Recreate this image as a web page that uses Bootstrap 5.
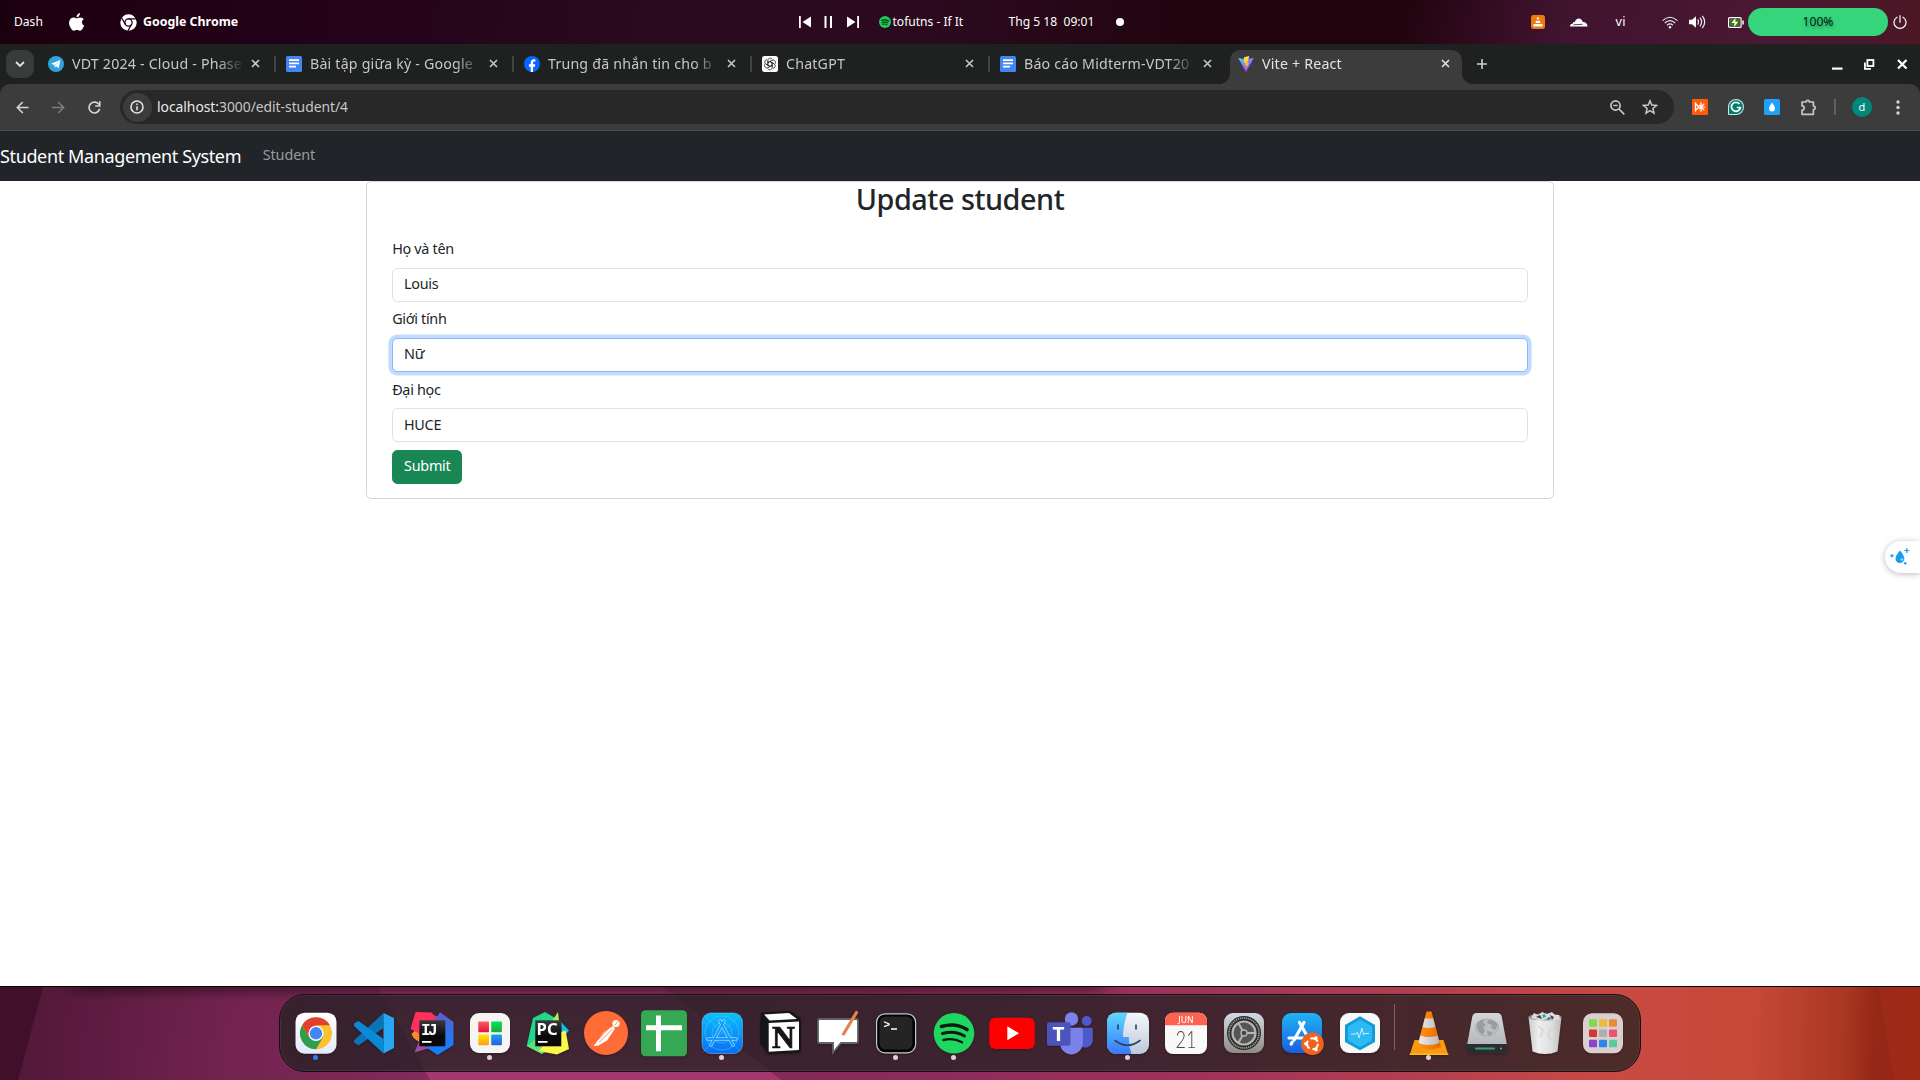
<!DOCTYPE html>
<html lang="vi">
<head>
<meta charset="utf-8">
<meta name="viewport" content="width=device-width, initial-scale=1">
<title>Vite + React</title>
<link href="https://cdn.jsdelivr.net/npm/bootstrap@5.3.0/dist/css/bootstrap.min.css" rel="stylesheet">
<style>
html{font-size:14.4px}
body{--bs-body-font-family:"Noto Sans","Open Sans",sans-serif;font-family:"Noto Sans","Open Sans",sans-serif;width:1920px;height:1080px;overflow:hidden;background:#000}
svg{display:block;flex:none}
.screen{width:1920px;height:1080px}
.cell{display:flex;align-items:center;justify-content:center;flex:none}
/* system bar */
.sysbar{height:44px;flex:none;color:#fff;font-size:12.1px;line-height:20px;white-space:pre;padding:0 13.5px 0 14px;background:linear-gradient(100deg,#1d000f 0,#23021a 17%,#2a0a1e 34%,#2b0a1f 48%,#22040f 62%,#22040f 73%,#40132f 81%,#4a1833 92%,#4c1725 100%)}
.sysbar .dash{width:28.5px}
.sysbar .apple{margin:0 35.5px 0 26px}
.sysbar .appname{font-size:12.4px;margin-left:6px;width:95px}
.sysbar .media{margin-left:560.5px}
.sysbar .spot{margin:0 2px 0 20px}
.sysbar .song{width:72px;letter-spacing:-.02px}
.sysbar .clock{margin-left:44px;width:86px}
.sysbar .bell{margin-left:21px}
.sysbar .cloud{margin:0 28px 0 24.5px}
.sysbar .lang{width:11px;font-size:12.6px;letter-spacing:.4px}
.sysbar .wifi{margin:0 11.5px 0 35px}
.sysbar .bat{margin:0 4.5px 0 21.5px}
.sysbar .power{margin-left:4.5px}
.charge{width:140px;height:28px;border-radius:14px;background:#35d57c;color:#04240f;text-shadow:1px 2px 3px rgba(0,0,0,.35)}
/* browser */
.browser{height:943px;flex:none;border-bottom:1px solid #000;background:#1f2120}
.tabstrip{height:40px;padding-left:6px}
.tabsearch{width:28px;height:28px;border-radius:9px;background:#3a3b3b;margin-right:3.5px}
.tabx{width:238px;height:34px;flex:none;padding-left:10.5px;padding-bottom:7px;font-size:14.2px;letter-spacing:.2px;color:#c7c7c7;position:relative}
.tabx::after{content:"";position:absolute;right:0;top:6px;width:2px;height:16px;background:#434544}
.tabx.last-idle::after{display:none}
.tabx .ttl{width:169px;margin-left:8px;overflow:hidden;white-space:nowrap;line-height:22px;-webkit-mask-image:linear-gradient(90deg,#000 86%,rgba(0,0,0,.12) 100%);mask-image:linear-gradient(90deg,#000 86%,rgba(0,0,0,.12) 100%)}
.tabx .cls{margin-left:10px}
.tabx.current{width:232px;margin-left:2.5px;padding-left:8px;background:#3c3c3c;border-radius:10px 10px 0 0;color:#e3e3e3}
.tabx.current::before,.tabx.current::after{content:"";position:absolute;top:auto;bottom:0;width:10px;height:10px;background:radial-gradient(circle at 0 0,transparent 9.5px,#3c3c3c 10px)}
.tabx.current::before{left:-10px}
.tabx.current::after{right:-10px;background:radial-gradient(circle at 100% 0,transparent 9.5px,#3c3c3c 10px)}
.newtab{width:40px}
.winb .w-min{width:34px}.winb .w-res{width:30px}.winb .w-cls{width:36px}
.toolbar{height:47px;background:#3c3c3c;border-bottom:1px solid #4b4c4c;border-radius:10px 10px 0 0;padding-left:4px}
.w36{width:36px}
.omni{width:1554px;height:34px;flex:none;border-radius:17px;background:#282828;margin:0 8px;padding-right:16px;font-size:13.9px;letter-spacing:-.04px;color:#c7c7c7}
.omni b{font-weight:400;color:#e8e8e8}
.omni .star{margin-left:17px}
.infob{width:29px;height:29px;border-radius:50%;background:#3c3c3c;margin-left:2.5px;margin-right:5.5px}
.tsep{width:18px}
.avatar{width:20px;height:20px;border-radius:50%;background:#00897b;color:#fff;font-size:11px;line-height:18px}
/* page */
.page{background:#fff;flex:1;position:relative}
.sms-nav{height:50px;background:#212529;padding:0}
.sms-nav .navbar-brand{padding-bottom:4px;letter-spacing:-.37px}
.sms-nav .nav-link{color:rgba(255,255,255,.55);padding-bottom:9px;letter-spacing:-.08px}
.student-card{width:1188px;margin:0 auto;border-color:#d3d4d5;letter-spacing:-.28px}
.student-card h2{letter-spacing:-.47px}
.student-card .inner{padding:0 25.2px 14.4px;margin-top:15.1px}
.student-card .form-label{letter-spacing:-.32px;margin-top:-.8px;margin-bottom:8.1px}
.student-card .form-control{padding-top:4.4px;padding-bottom:6.2px}
.student-card .form-control.is-focus{border-color:#86b7fe;box-shadow:0 0 0 .25rem rgba(13,110,253,.25)}
.student-card .btn{padding-top:4.2px;padding-bottom:6.4px;letter-spacing:-.25px}
.side-tool{position:absolute;right:0;top:360px;width:35px;height:32px;border-radius:16px 0 0 16px;background:#fff;box-shadow:0 1px 6px rgba(0,0,0,.28);padding-left:5px}
/* desktop and dock */
.desk{height:93px;position:relative;overflow:hidden}
.wall{position:absolute;left:0;top:0}
.dock{position:relative;width:1362px;height:78px;margin:7px 0 0 278.5px;border-radius:26px;background:rgba(33,33,33,.74);border:1px solid #1a0c13;box-shadow:inset 0 0 0 1px rgba(255,255,255,.08);padding-left:7px}
.app{width:58px;height:76px;position:relative}
.app svg{filter:drop-shadow(0 1px 1px rgba(0,0,0,.25))}
.app.on::after{content:"";position:absolute;left:26.5px;bottom:11px;width:5px;height:5px;border-radius:50%;background:#dcd3d8}
.app.on.focus::after{background:#2f7bf6}
.dsep{width:1px;height:46px;margin:9px 5px 0;background:#7d6367;align-self:flex-start}
</style>
</head>
<body>
<div class="screen d-flex flex-column">

<!-- system bar -->
<div class="sysbar d-flex align-items-center">
  <span class="dash">Dash</span>
  <svg class="apple" width="16" height="18" viewBox="0 0 16 18" fill="#fff"><path d="M11 0c.1 1.200-.3 2.200-1 3-.7.8-1.600 1.300-2.500 1.200C7.400 3.200 7.900 2.200 8.500 1.500 9.100.7 10.100.1 11 0zM14.800 6.200c-1.200.8-1.800 1.700-1.800 3 0 1.500.8 2.700 2.200 3.300-.3.900-.8 1.900-1.400 2.800-.8 1.200-1.600 2.400-2.900 2.400-1.200 0-1.600-.7-3-.7s-1.900.7-3 .8c-1.200 0-2.200-1.300-3-2.500C.2 13 -.7 9.200.9 6.700 1.700 5.300 3 4.500 4.500 4.500c1.300 0 2.300.8 3.200.8.8 0 2.100-1 3.700-.8 1.300.1 2.600.6 3.400 1.700z"/></svg>
  <svg width="17" height="17" viewBox="0 0 17 17"><circle cx="8.500" cy="8.500" r="8.200" fill="#fff"/><circle cx="8.500" cy="8.500" r="3.600" fill="#fff" stroke="#23021a" stroke-width="1.300"/><path d="M8.500 4.900h7.400M5.400 10.300 1.700 4M11.600 10.300 8 16.700" stroke="#23021a" stroke-width="1.300"/></svg>
  <b class="appname">Google Chrome</b>
  <svg class="media" width="60" height="12" viewBox="0 0 60 12" fill="#fff"><path d="M0 0h1.800v12H0zM12 .5v11L3.500 6zM25.500 0h2v12h-2zM31 0h2v12h-2zM48 .5v11L56.500 6zM58.200 0H60v12h-1.800z"/></svg>
  <svg class="spot" width="12" height="12" viewBox="0 0 14 14"><circle cx="7" cy="7" r="7" fill="#1ec95a"/><g fill="none" stroke="#0b2a15" stroke-linecap="round"><path d="M3 5q4.500-1.300 8 .7" stroke-width="1.400"/><path d="M3.500 7.300q3.700-1 6.800.7" stroke-width="1.200"/><path d="M4 9.500q3-.8 5.500.6" stroke-width="1"/></g></svg>
  <span class="song">tofutns - If It</span>
  <span class="clock">Thg 5 18  09:01</span>
  <svg class="bell" width="8" height="8"><circle cx="4" cy="4" r="4" fill="#fff"/></svg>
  <div class="ms-auto d-flex align-items-center">
    <svg width="14" height="14" viewBox="0 0 14 14"><rect width="14" height="14" rx="2.500" fill="#ee7a0d"/><path d="M6.200 2.500h1.600l.6 1.800H5.600zM5.100 5.700h3.800l.7 2.200H4.400zM2.500 9h9v2.500h-9z" fill="#fff"/></svg>
    <svg class="cloud" width="18" height="9" viewBox="0 0 18 9" fill="#fff"><path d="M0 8.500c0-2 1.200-3 2.600-2.800C2.700 4.300 3.700 3.800 4.800 4.200 5.500 1.500 7.200.3 9.200.5c2 .2 3.200 1.700 3.500 3.400 2.800-.2 4.700 1.700 4.900 4.600z"/><path d="M3.500 6.800 12.500 6.300" stroke="#40132f" stroke-width=".8"/></svg>
    <span class="lang">vi</span>
    <svg class="wifi" width="16" height="13" viewBox="0 0 17 13" fill="none" stroke="#eee" stroke-width="1.200"><path d="M.6 4.600Q8.500-2.800 16.400 4.600M3 7Q8.500 1.900 14 7M5.400 9.400Q8.500 6.600 11.600 9.400"/><circle cx="8.500" cy="11.500" r=".8" fill="#fff"/></svg>
    <svg width="17" height="14" viewBox="0 0 17 14" fill="none" stroke="#eee" stroke-width="1.200"><path d="M0 4.700h3L7 1.200v11.600L3 9.300H0z" fill="#fff" stroke="none"/><path d="M8.600 4.400q1.800 2.600 0 5.200M11 2.600q3.200 4.400 0 8.800M13.300.8q4.800 6.200 0 12.400"/></svg>
    <svg class="bat" width="16" height="11" viewBox="0 0 16 11"><rect x=".6" y=".6" width="12.500" height="9.800" rx="1" fill="none" stroke="#fff" stroke-width="1.200"/><rect x="2" y="2" width="9.700" height="7" fill="#3a7a10"/><path d="M7.500 1 3.500 6h3L6 10l4.200-5.200H7.300z" fill="#fff"/><path d="M14.300 3.500h1.500v4h-1.500z" fill="#fff"/></svg>
    <div class="charge cell">100%</div>
    <svg class="power" width="14" height="14" viewBox="0 0 14 14" fill="none" stroke="#eee" stroke-width="1.300" stroke-linecap="round"><path d="M4 2.200a6 6 0 1 0 6 0M7 .7v6.500"/></svg>
  </div>
</div>

<!-- browser window -->
<div class="browser d-flex flex-column">
  <div class="tabstrip d-flex align-items-end">
    <div class="tabsearch cell align-self-center"><svg width="10" height="6" viewBox="0 0 10 6" fill="none" stroke="#e3e3e3" stroke-width="1.800"><path d="M1 1l4 4 4-4"/></svg></div>
    <div class="tabx d-flex align-items-center">
      <svg width="16" height="16" viewBox="0 0 16 16"><circle cx="8" cy="8" r="8" fill="#2fa3dc"/><path d="M3 7.800 12.300 4l-1.500 8.200-2.700-2-1.400 1.400-.3-2.500z" fill="#fff"/><path d="M6.400 9.100 10.500 5.800 7 9.700z" fill="#9fd3ef"/></svg>
      <span class="ttl">VDT 2024 - Cloud - Phase</span>
      <svg class="cls" width="9" height="9" viewBox="0 0 9 9" stroke="#c7c7c7" stroke-width="1.600"><path d="M1 1l7 7M8 1 1 8"/></svg>
    </div>
    <div class="tabx d-flex align-items-center">
      <svg width="16" height="16" viewBox="0 0 16 16"><rect width="16" height="16" rx="1.500" fill="#4285f4"/><path d="M3 3.300h10v1.700H3zM3 6.500h10v1.700H3zM3 9.700h7v1.700H3z" fill="#fff"/></svg>
      <span class="ttl">Bài tập giữa kỳ - Google</span>
      <svg class="cls" width="9" height="9" viewBox="0 0 9 9" stroke="#c7c7c7" stroke-width="1.600"><path d="M1 1l7 7M8 1 1 8"/></svg>
    </div>
    <div class="tabx d-flex align-items-center">
      <svg width="16" height="16" viewBox="0 0 16 16"><circle cx="8" cy="8" r="8" fill="#0866ff"/><path d="M6.700 16v-5.300H4.900V8.200h1.800V7c0-2.400 1.200-3.700 3.300-3.700.5 0 1.100.1 1.400.2v2.100h-.9c-1 0-1.400.5-1.400 1.400v1.200h2.200l-.4 2.500H9.100V16z" fill="#fff"/></svg>
      <span class="ttl">Trung đã nhắn tin cho b</span>
      <svg class="cls" width="9" height="9" viewBox="0 0 9 9" stroke="#c7c7c7" stroke-width="1.600"><path d="M1 1l7 7M8 1 1 8"/></svg>
    </div>
    <div class="tabx d-flex align-items-center">
      <svg width="16" height="16" viewBox="0 0 16 16"><rect width="16" height="16" rx="2.500" fill="#fff"/><g fill="none" stroke="#222" stroke-width=".75"><path id="petal" d="M5.800 9.200V4.600a2.500 2.500 0 0 1 4.600-1.300M6 6.800l3.800-2.200"/><use href="#petal" transform="rotate(60 8 8)"/><use href="#petal" transform="rotate(120 8 8)"/><use href="#petal" transform="rotate(180 8 8)"/><use href="#petal" transform="rotate(240 8 8)"/><use href="#petal" transform="rotate(300 8 8)"/></g></svg>
      <span class="ttl">ChatGPT</span>
      <svg class="cls" width="9" height="9" viewBox="0 0 9 9" stroke="#c7c7c7" stroke-width="1.600"><path d="M1 1l7 7M8 1 1 8"/></svg>
    </div>
    <div class="tabx last-idle d-flex align-items-center">
      <svg width="16" height="16" viewBox="0 0 16 16"><rect width="16" height="16" rx="1.500" fill="#4285f4"/><path d="M3 3.300h10v1.700H3zM3 6.500h10v1.700H3zM3 9.700h7v1.700H3z" fill="#fff"/></svg>
      <span class="ttl">Báo cáo Midterm-VDT20</span>
      <svg class="cls" width="9" height="9" viewBox="0 0 9 9" stroke="#c7c7c7" stroke-width="1.600"><path d="M1 1l7 7M8 1 1 8"/></svg>
    </div>
    <div class="tabx current d-flex align-items-center">
      <svg width="16" height="16" viewBox="0 0 16 16"><defs><linearGradient id="vt" x1="0" y1="0" x2=".6" y2="1"><stop offset="0" stop-color="#41d1ff"/><stop offset="1" stop-color="#bd34fe"/></linearGradient><linearGradient id="vb" x1="0" y1="0" x2="0" y2="1"><stop offset="0" stop-color="#ffea83"/><stop offset=".2" stop-color="#ffdd35"/><stop offset="1" stop-color="#ffa800"/></linearGradient></defs><path d="M.2 2 7.500 3.300 15.800 2 8.300 15.600q-.3.400-.6 0z" fill="url(#vt)"/><path d="M11.300.1 6 1.200 5.700 7l1.700-.3-.5 2.600 1.500-.4L7.600 13l3.500-6-1.800.3z" fill="url(#vb)"/></svg>
      <span class="ttl">Vite + React</span>
      <svg class="cls" width="9" height="9" viewBox="0 0 9 9" stroke="#e3e3e3" stroke-width="1.600"><path d="M1 1l7 7M8 1 1 8"/></svg>
    </div>
    <div class="newtab cell align-self-center"><svg width="10" height="10" viewBox="0 0 10 10" stroke="#d0d0d0" stroke-width="1.600"><path d="M5 0v10M0 5h10"/></svg></div>
    <div class="winb ms-auto d-flex align-self-center">
      <div class="cell w-min"><svg width="11" height="11"><path d="M0 8.500h10.500v2.200H0z" fill="#fff"/></svg></div>
      <div class="cell w-res"><svg width="11" height="11" fill="none" stroke="#fff" stroke-width="1.800"><rect x="3.400" y="1" width="6" height="6"/><path d="M.9 3.500v6.300h6"/></svg></div>
      <div class="cell w-cls"><svg width="11" height="11" stroke="#fff" stroke-width="2.200"><path d="M1 1l8.500 8.500M9.500 1 1 9.500"/></svg></div>
    </div>
  </div>

  <div class="toolbar d-flex align-items-center">
    <div class="cell w36"><svg width="13" height="13" viewBox="0 0 13 13" fill="none" stroke="#d4d4d4" stroke-width="1.600"><path d="M12.500 6.500H1.500M6.800 1 1.300 6.500 6.800 12"/></svg></div>
    <div class="cell w36"><svg width="13" height="13" viewBox="0 0 13 13" fill="none" stroke="#7c7c7c" stroke-width="1.600"><path d="M0 6.500h11.500M6.200 1l5.500 5.500L6.200 12"/></svg></div>
    <div class="cell w36"><svg width="13" height="13" viewBox="0 0 13 13" fill="none" stroke="#d4d4d4" stroke-width="1.600"><path d="M11 3.600A5.400 5.400 0 1 0 11.700 7.800"/><path d="M11.800.3v4.700H7.200"/></svg></div>
    <div class="omni d-flex align-items-center">
      <div class="infob cell"><svg width="14" height="14" viewBox="0 0 14 14" fill="none" stroke="#e3e3e3" stroke-width="1.600"><circle cx="7" cy="7" r="6"/><path d="M7 6.300v4M7 3.500v1.600"/></svg></div>
      <span><b>localhost:</b>3000/edit-student/4</span>
      <svg class="ms-auto" width="15" height="15" viewBox="0 0 15 15" fill="none" stroke="#c7c7c7" stroke-width="1.700"><circle cx="5.500" cy="5.500" r="4.600"/><path d="M9 9l5.300 5.300M3.300 5.500h4.400"/></svg>
      <svg class="star" width="16" height="16" viewBox="0 0 16 16" fill="none" stroke="#c7c7c7" stroke-width="1.500"><path d="M8 1.800l1.800 4.300 4.700.4-3.600 3 1.100 4.600-4-2.500-4 2.500 1.100-4.600-3.600-3 4.700-.4z"/></svg>
    </div>
    <div class="cell w36"><svg width="16" height="16" viewBox="0 0 16 16"><rect width="16" height="16" rx="1" fill="#ff5a0a"/><g stroke="#fff" fill="none"><path d="M3.500 4.500v7L6.800 8z" stroke-width="1.300"/><path d="M9 3.200v9.600M7 6l2 2-2 2M9 8h4M9.500 7.500l2.800-2.800M9.500 8.500l2.800 2.800" stroke-width="1.200"/></g></svg></div>
    <div class="cell w36"><svg width="16" height="16" viewBox="0 0 16 16"><path d="M8 0a8 8 0 1 1 0 16H1q-1 0-1-1V8a8 8 0 0 1 8-8z" fill="#d5e6e2"/><path d="M8 1a7 7 0 1 1 0 14H1.500q-.5 0-.5-.5V8a7 7 0 0 1 7-7z" fill="#027e6f"/><path d="M11.500 5A4.500 4.500 0 1 0 12.400 8.500H8.800" stroke="#fff" stroke-width="1.700" fill="none"/></svg></div>
    <div class="cell w36"><svg width="16" height="16" viewBox="0 0 16 16"><rect width="16" height="16" rx="1.500" fill="#1da1f9"/><path d="M8 3.500q3 4 3 6a3 3 0 0 1-6 0q0-2 3-6z" fill="#fff"/></svg></div>
    <div class="cell w36"><svg width="18" height="17" viewBox="0 0 18 17" fill="none" stroke="#c7c7c7" stroke-width="1.700" stroke-linejoin="round"><path d="M3 3h4a1.700 1.700 0 0 1 3.400 0h4v4a1.800 1.800 0 0 1 0 3.600v4.700H3v-4a2.200 2.200 0 0 0 0-4.500z"/></svg></div>
    <div class="cell tsep"><svg width="2" height="16"><rect width="2" height="16" fill="#5f6161"/></svg></div>
    <div class="cell w36"><div class="avatar cell">d</div></div>
    <div class="cell w36"><svg width="4" height="15" fill="#d4d4d4"><circle cx="2" cy="2" r="1.700"/><circle cx="2" cy="7.500" r="1.700"/><circle cx="2" cy="13" r="1.700"/></svg></div>
  </div>

  <nav class="sms-nav navbar navbar-expand navbar-dark flex-shrink-0">
    <a class="navbar-brand" href="#">Student Management System</a>
    <ul class="navbar-nav"><li class="nav-item"><a class="nav-link" href="#">Student</a></li></ul>
  </nav>

  <main class="page">
    <div class="card student-card">
      <h2 class="text-center mb-2">Update student</h2>
      <form class="inner">
        <div class="mb-2"><label class="form-label d-block">Họ và tên</label><div class="form-control">Louis</div></div>
        <div class="mb-2"><label class="form-label d-block">Giới tính</label><div class="form-control is-focus">Nữ</div></div>
        <div class="mb-2"><label class="form-label d-block">Đại học</label><div class="form-control">HUCE</div></div>
        <button type="button" class="btn btn-success">Submit</button>
      </form>
    </div>
    <div class="side-tool d-flex align-items-center"><svg width="21" height="20" viewBox="0 0 21 20" fill="#1a9af0"><path d="M10 3.500q4.300 5 4.300 8.200a4.400 4.400 0 0 1-8.800 0q0-3.200 4.500-8.200z"/><path d="M16.800 1v5M14.300 3.500h5M2 7v3.600M.2 8.800h3.600M15.200 15v2.600M13.900 16.300h2.600" stroke="#1a9af0" stroke-width="1.200"/><circle cx="12" cy="12.500" r="1.300" fill="#9ad5fb"/></svg></div>
  </main>
</div>

<!-- desktop strip with dock -->
<div class="desk">
  <svg class="wall" width="1920" height="93" viewBox="0 0 1920 93">
    <defs>
      <linearGradient id="w1" gradientUnits="userSpaceOnUse" x1="30" y1="0" x2="430" y2="30"><stop offset="0" stop-color="#53183a"/><stop offset=".5" stop-color="#72234f"/><stop offset="1" stop-color="#822b5c"/></linearGradient>
      <linearGradient id="w2" gradientUnits="userSpaceOnUse" x1="0" y1="0" x2="0" y2="93"><stop offset="0" stop-color="#8c2f60"/><stop offset="1" stop-color="#a53871"/></linearGradient>
      <linearGradient id="w3" gradientUnits="userSpaceOnUse" x1="660" y1="0" x2="1920" y2="40"><stop offset="0" stop-color="#7c2952"/><stop offset=".2" stop-color="#8a2b5c"/><stop offset=".42" stop-color="#9f325b"/><stop offset=".6" stop-color="#b23f50"/><stop offset=".76" stop-color="#c94a43"/><stop offset=".87" stop-color="#c64836"/><stop offset=".94" stop-color="#a93722"/><stop offset=".965" stop-color="#942716"/><stop offset="1" stop-color="#9b2817"/></linearGradient>
      <filter id="soft" x="-5%" y="-200%" width="110%" height="500%"><feGaussianBlur stdDeviation="12 5"/></filter>
    </defs>
    <rect width="1920" height="93" fill="url(#w1)"/>
    <path d="M0 0h43L18 93H0z" fill="#400f2a"/>
    <path d="M379 0h300l110 93H430z" fill="url(#w2)"/>
    <path d="M663 0h1257v93H781z" fill="url(#w3)"/>
    <path d="M1878 0h42v93h-26z" fill="#a02c1a" opacity=".7"/>
    <rect x="70" y="-12" width="1035" height="18" fill="#000" opacity=".38" filter="url(#soft)"/>
  </svg>
  <div class="dock d-flex align-items-center">
    <div class="app cell on focus"><svg width="48" height="48" viewBox="0 0 48 48"><defs><linearGradient id="a1" x1="0" y1="0" x2="0" y2="1"><stop offset="0" stop-color="#fff"/><stop offset="1" stop-color="#e3ebfb"/></linearGradient></defs><rect x="3.500" y="3.700" width="41" height="41" rx="9" fill="url(#a1)"/><circle cx="24" cy="24.300" r="16" fill="#fbc12f"/><path d="M10.140 16.300A16 16 0 0 1 37.900 16.300H24L17 28.300z" fill="#e2412f"/><path d="M10.140 16.300A16 16 0 0 0 24 40.300L31 28.300 17 28.300z" fill="#2f9e4f"/><circle cx="24" cy="24.300" r="7.600" fill="#fff"/><circle cx="24" cy="24.300" r="6.200" fill="#4285f4"/></svg></div>
    <div class="app cell"><svg width="48" height="48" viewBox="0 0 48 48"><path d="M33.500 4v15L8.500 36.500 4 33.500v-2z" fill="#0a74b8"/><path d="M8.500 12 33.500 30v14.500L4 17v-2.500z" fill="#088ad6"/><path d="M33.500 4 44 9v30l-10.500 5.500z" fill="#27a6f3"/></svg></div>
    <div class="app cell"><svg width="48" height="48" viewBox="0 0 48 48"><defs><linearGradient id="ij" x1=".3" y1="0" x2=".6" y2="1"><stop offset="0" stop-color="#6b57c6"/><stop offset="1" stop-color="#0a84ff"/></linearGradient><linearGradient id="blk" x1="0" y1="0" x2="0" y2="1"><stop offset="0" stop-color="#3a3a3a"/><stop offset=".6" stop-color="#0a0a0a"/></linearGradient></defs><path d="M3.500 25l9-9v18l-7-5z" fill="#f78b2d"/><path d="M12 30 6.500 43.500 25 38z" fill="#9b4f9f"/><path d="M23 5 36 10 26 18z" fill="#c43c8c"/><path d="M7.500 3 24 3.500 29 13 12 25 2.500 20z" fill="#fe315d"/><path d="M32 3.300 45.500 13v23L29.500 46 18 38l7-24z" fill="url(#ij)"/><rect x="11.300" y="11.300" width="26" height="26" fill="url(#blk)"/><text x="13" y="26" font-family="Liberation Mono,monospace" font-weight="700" font-size="16" textLength="16.500" fill="#fff">IJ</text><rect x="14" y="32" width="9.500" height="1.800" fill="#fff"/></svg></div>
    <div class="app cell on"><svg width="48" height="48" viewBox="0 0 48 48"><defs><linearGradient id="q1" x1="0" y1="0" x2="0" y2="1"><stop offset="0" stop-color="#ff5a5f"/><stop offset="1" stop-color="#e8123c"/></linearGradient><linearGradient id="q2" x1="0" y1="0" x2="0" y2="1"><stop offset="0" stop-color="#05e05c"/><stop offset="1" stop-color="#17b02f"/></linearGradient><linearGradient id="q3" x1="0" y1="0" x2="0" y2="1"><stop offset="0" stop-color="#ffec00"/><stop offset="1" stop-color="#ff9c1a"/></linearGradient><linearGradient id="q4" x1="0" y1="0" x2="0" y2="1"><stop offset="0" stop-color="#15a5ef"/><stop offset="1" stop-color="#2b5ed6"/></linearGradient></defs><rect x="4" y="4" width="40" height="40" rx="9" fill="#f7f5f4"/><rect x="12.300" y="12.500" width="10.700" height="10.700" rx="1" fill="url(#q1)"/><rect x="25.200" y="12.500" width="10.700" height="10.700" rx="1" fill="url(#q2)"/><rect x="12.300" y="25.500" width="10.700" height="10.700" rx="1" fill="url(#q3)"/><rect x="25.200" y="25.500" width="10.700" height="10.700" rx="1" fill="url(#q4)"/></svg></div>
    <div class="app cell"><svg width="48" height="48" viewBox="0 0 48 48"><path d="M9 9 21 3l12 7-10 32-5 3L2.700 37z" fill="#21d789"/><path d="M2.700 37 12 30l10 8-4 7z" fill="#5ee07b"/><path d="M34 3l1.500 12H26z" fill="#a5ed5c"/><path d="M37 13l8 8.500L38 30z" fill="#07c3f2"/><path d="M41.500 21.500 45 40l-12 5.500L14.500 42 30 25z" fill="#fcf84a"/><rect x="11.300" y="11.300" width="26" height="26" fill="url(#blk)"/><text x="12.600" y="25.500" font-family="Noto Sans,sans-serif" font-weight="700" font-size="15.500" textLength="21" lengthAdjust="spacingAndGlyphs" fill="#fff">PC</text><rect x="14" y="32" width="9.500" height="1.800" fill="#fff"/></svg></div>
    <div class="app cell"><svg width="48" height="48" viewBox="0 0 48 48"><circle cx="24" cy="24" r="22" fill="#ff6c37"/><circle cx="34" cy="14.500" r="3.600" fill="#fff"/><path d="M31 17l2 2.500-8 12-8.500 5L11.500 37l2-2.500L22 23z" fill="#fff"/><path d="M30 20.500 17 33.500M26 20 16 31M36.500 12l-4 4.500" stroke="#ff6c37" stroke-width=".8" fill="none"/></svg></div>
    <div class="app cell"><svg width="48" height="48" viewBox="0 0 48 48"><rect x="1" y="1.300" width="46" height="46" rx="4.500" fill="#34a853"/><path d="M16 6.500h5v9.800h21v5H21V42.300h-5v-21H6v-5h10z" fill="#fff"/></svg></div>
    <div class="app cell on"><svg width="48" height="48" viewBox="0 0 48 48"><defs><linearGradient id="as" x1="0" y1="0" x2="0" y2="1"><stop offset="0" stop-color="#08c0fb"/><stop offset="1" stop-color="#0a6df5"/></linearGradient></defs><rect x="4" y="4" width="40.500" height="40.500" rx="9" fill="url(#as)" stroke="#7fd0ff" stroke-opacity=".5" stroke-width="1"/><g fill="none" stroke="#a9e2ff"><circle cx="24" cy="24" r="17" stroke-width=".5" opacity=".6"/><circle cx="24" cy="24" r="10" stroke-width=".5" opacity=".6"/><path d="M5 5l38 38M43 5 5 43" stroke-width=".4" opacity=".5"/><path d="M26 12 13 36M22 12l13 24M10 30h28" stroke-width="3.600" stroke-linecap="round" opacity=".85"/></g><path d="M26 12 13 36M22 12l13 24M10 30h28" stroke="#139bf8" stroke-width="2" stroke-linecap="round"/></svg></div>
    <div class="app cell"><svg width="48" height="48" viewBox="0 0 48 48"><path d="M4.500 4.500Q5 3.500 7 3.300L33 2q2 0 4 1.500l7 5.500q1 1 1 3v29q0 2.500-2.500 2.700L14 45q-2 0-3-1.500L5 36q-1-1.500-1-3z" fill="#161616"/><path d="M8 5.500 33 4l8 6-27.500 1.500zM12.700 14 43 12.500V41L12.700 42.700z" fill="#fff"/><text x="16" y="38.500" font-family="Liberation Serif,serif" font-weight="700" font-size="31" textLength="23" lengthAdjust="spacingAndGlyphs" fill="#161616" stroke="#161616" stroke-width=".7">N</text></svg></div>
    <div class="app cell"><svg width="48" height="48" viewBox="0 0 48 48"><path d="M5.500 10h37q1.500 0 1.500 1.500v21q0 1.500-1.500 1.500H27L19 43.500V34H5.500Q4 34 4 32.500v-21Q4 10 5.500 10z" fill="#fff" stroke="#5c6361" stroke-width="1.800"/><path d="M42.500 3.500 29.500 25" stroke="#e9824a" stroke-width="3.200" stroke-linecap="round"/></svg></div>
    <div class="app cell on"><svg width="48" height="48" viewBox="0 0 48 48"><rect x="4.600" y="4.800" width="39" height="39" rx="8.500" fill="#000" stroke="#bfcbd2" stroke-width="1.200"/><rect x="7.500" y="7.500" width="33" height="33" rx="6" fill="#242424"/><text x="11.500" y="19" font-family="Liberation Mono,monospace" font-weight="700" font-size="11" fill="#fff">&gt;</text><path d="M19 20h6" stroke="#fff" stroke-width="1.500"/></svg></div>
    <div class="app cell on"><svg width="48" height="48" viewBox="0 0 48 48"><circle cx="24" cy="24.300" r="20.300" fill="#1ed760"/><g fill="none" stroke="#101a14" stroke-linecap="round"><path d="M11.500 17.500q14-4 25.500 3" stroke-width="3.600"/><path d="M12.500 24.500q12-3.500 22 2.500" stroke-width="3"/><path d="M13.500 31q10-2.500 18.500 2.300" stroke-width="2.400"/></g></svg></div>
    <div class="app cell"><svg width="48" height="48" viewBox="0 0 48 48"><rect x="1.300" y="8.700" width="45.500" height="31.300" rx="6" fill="#f00"/><path d="M19.300 17.300 31 24.300l-11.700 7z" fill="#fff"/></svg></div>
    <div class="app cell"><svg width="48" height="48" viewBox="0 0 48 48"><circle cx="40.700" cy="12" r="5" fill="#5059c9"/><path d="M32 18.700h13q1.800 0 1.800 1.800V31a7.500 7.500 0 0 1-12 6z" fill="#5059c9"/><circle cx="25.500" cy="10" r="6.700" fill="#7b83eb"/><path d="M14 18.700h21q1.800 0 1.800 1.800V34a11.400 11.400 0 0 1-22.800 0z" fill="#7b83eb"/><rect x="1" y="13.300" width="23.500" height="23.500" rx="2" fill="#4b53bc"/><text x="6.500" y="31.500" font-family="Noto Sans,sans-serif" font-weight="700" font-size="19" textLength="12" lengthAdjust="spacingAndGlyphs" fill="#fff">T</text></svg></div>
    <div class="app cell on"><svg width="48" height="48" viewBox="0 0 48 48"><defs><linearGradient id="f1" x1="0" y1="0" x2="0" y2="1"><stop offset="0" stop-color="#5fd9ff"/><stop offset="1" stop-color="#3a78f8"/></linearGradient><linearGradient id="f2" x1="0" y1="0" x2="0" y2="1"><stop offset="0" stop-color="#f5f8fc"/><stop offset="1" stop-color="#bcc8da"/></linearGradient></defs><rect x="3" y="3.700" width="42" height="41.300" rx="9" fill="url(#f2)"/><path d="M12 3.700h11.500Q19 16 19 28h6q-.5 9 2.500 17H12a9 9 0 0 1-9-9V12.700a9 9 0 0 1 9-9z" fill="url(#f1)"/><path d="M14 16v4M32 16v4" stroke="#1c3a5c" stroke-width="1.500" stroke-linecap="round"/><path d="M11 31.500q12.500 9.500 25 0" stroke="#2a4464" stroke-width="1.600" fill="none" stroke-linecap="round"/></svg></div>
    <div class="app cell"><svg width="48" height="48" viewBox="0 0 48 48"><rect x="3" y="3.700" width="42" height="41.300" rx="8" fill="#f9f9f9"/><path d="M11 3.700h26a8 8 0 0 1 8 8v4.600H3v-4.600a8 8 0 0 1 8-8z" fill="#ff6250"/><text x="24" y="13.500" text-anchor="middle" font-family="Noto Sans,sans-serif" font-weight="500" font-size="8.500" fill="#fff">JUN</text><text x="24" y="38.500" text-anchor="middle" font-family="Lato,Noto Sans,sans-serif" font-weight="300" font-size="24" textLength="21" lengthAdjust="spacingAndGlyphs" fill="#4a4a4a">21</text></svg></div>
    <div class="app cell"><svg width="48" height="48" viewBox="0 0 48 48"><defs><linearGradient id="s1" x1="0" y1="0" x2="0" y2="1"><stop offset="0" stop-color="#cfdbe4"/><stop offset="1" stop-color="#8f8c85"/></linearGradient></defs><rect x="4" y="4" width="40" height="40" rx="9" fill="url(#s1)"/><circle cx="24" cy="24" r="17" fill="#2b2b2b"/><circle cx="24" cy="24" r="15" fill="none" stroke="#a8a8a8" stroke-width="1.600" stroke-dasharray="1.200 .8"/><circle cx="24" cy="24" r="11.500" fill="#555" stroke="#b5b5b5" stroke-width="2.200"/><path d="M24 24h11.500M24 24l-5.700-10M24 24l-5.700 10" stroke="#b5b5b5" stroke-width="2"/><circle cx="24" cy="24" r="3" fill="#444" stroke="#b5b5b5" stroke-width="1.400"/></svg></div>
    <div class="app cell"><svg width="48" height="48" viewBox="0 0 48 48"><defs><linearGradient id="u1" x1="0" y1="0" x2="0" y2="1"><stop offset="0" stop-color="#1fb4f5"/><stop offset="1" stop-color="#1a5fe0"/></linearGradient></defs><rect x="4" y="4" width="40" height="40" rx="9" fill="url(#u1)"/><path d="M26 13.500 16 31M21.500 13.500 33 34M11 29h18M14 33.500l-.8 1.500" stroke="#fff" stroke-width="3.200" stroke-linecap="round"/><circle cx="34.500" cy="34.700" r="11.300" fill="#f0641e"/><circle cx="34.500" cy="34.700" r="5.500" fill="none" stroke="#fff" stroke-width="2" stroke-dasharray="8.500 3"/><g fill="#fff"><circle cx="27.800" cy="34.700" r="1.700"/><circle cx="38" cy="29" r="1.700"/><circle cx="38" cy="40.500" r="1.700"/></g></svg></div>
    <div class="app cell"><svg width="48" height="48" viewBox="0 0 48 48"><rect x="4" y="4" width="40" height="40" rx="9" fill="#f8f8f8"/><path d="M24 7.300 39 16v17L24 41.300 9 33V16z" fill="#119bd8"/><path d="M24 10.500 36 17.500v14L24 38.300 12 31.500v-14z" fill="#2cb9f4"/><path d="M15 25h5l1.500-2 1.500 6 3-10 1.500 7 1-1.500h4.500" fill="none" stroke="#c9efff" stroke-width="1"/></svg></div>
    <div class="dsep"></div>
    <div class="app cell on"><svg width="48" height="48" viewBox="0 0 48 48"><defs><linearGradient id="v1" x1="0" y1="0" x2="1" y2="0"><stop offset="0" stop-color="#ff9a1a"/><stop offset=".6" stop-color="#f57b05"/><stop offset="1" stop-color="#e06600"/></linearGradient><linearGradient id="v2" x1="0" y1="0" x2="1" y2="0"><stop offset="0" stop-color="#eee"/><stop offset="1" stop-color="#b8b8b8"/></linearGradient></defs><path d="M9.500 31h29l4.800 15H4.700z" fill="#fb9a0c"/><path d="M4.700 44.500h38.600V46H4.700z" fill="#ffb81c"/><path d="M21.500 2.500h5L36 38q-12 5-24 0z" fill="url(#v1)"/><path d="M19.700 9.500h8.600l2 8.500q-6.300 2-12.600 0zM15.500 26.500q8.500 3 17 0l2 7.500q-10.500 4-21 0z" fill="url(#v2)"/></svg></div>
    <div class="app cell"><svg width="48" height="48" viewBox="0 0 48 48"><defs><linearGradient id="d1" x1="0" y1="0" x2="0" y2="1"><stop offset="0" stop-color="#d5d6d9"/><stop offset="1" stop-color="#b5b7bc"/></linearGradient></defs><path d="M13.500 4h21q3.500 0 4.200 3.500L44 36H4L9.300 7.500Q10 4 13.500 4z" fill="url(#d1)"/><path d="M4 35h40v5q0 4.300-4.300 4.300H8.300Q4 44.300 4 40z" fill="#2a2d31"/><rect x="12" y="38.500" width="20" height="2" rx="1" fill="#3e9c7c"/><circle cx="38" cy="39.500" r="1" fill="#999"/><ellipse cx="24" cy="18.500" rx="11.500" ry="8.500" fill="#bcbec2" stroke="#a2a5aa" stroke-width=".8"/><path d="M14 14q3-3 7-3.500l-1 3 3 2-3 3 2 3-2 4q-6-3-6-8zM25 11q7 0 10 5l-3 5-4-2 1-3-5-2zM24 22l6 1-3 3.500h-2z" fill="#999ca1"/></svg></div>
    <div class="app cell"><svg width="48" height="48" viewBox="0 0 48 48"><defs><linearGradient id="t1" x1="0" y1="0" x2="1" y2="0"><stop offset="0" stop-color="#c9c9c9"/><stop offset=".3" stop-color="#efefef"/><stop offset=".7" stop-color="#dedede"/><stop offset="1" stop-color="#bdbdbd"/></linearGradient></defs><path d="M7.500 8h33l-4 34.500q-12.500 5-25 0z" fill="url(#t1)"/><ellipse cx="24" cy="8" rx="16.500" ry="3.500" fill="#8b8b8b"/><path d="M10 9l3-5 4 2 4-3 5 2 5-2 3 3 4 0 1 4-7 2-6-2-6 2z" fill="#dcdcdc"/><path d="M15 8l4-2 2 4zM29 6l4 2-2 3z" fill="#44403c"/><path d="M21 6l3-1 1 3-3 1z" fill="#38b08a"/><path d="M26 9l3-1 1 2-3 1z" fill="#3272b8"/><path d="M17 17l5 4-3 7M30 18l-3 8 4 6" fill="none" stroke="#d4d4d4" stroke-width="1.500"/></svg></div>
    <div class="app cell"><svg width="48" height="48" viewBox="0 0 48 48"><rect x="4" y="4.300" width="40" height="40" rx="9" fill="#dacfd0"/><rect x="10" y="10.300" width="8" height="7.500" rx="1" fill="#7ddc4a"/><rect x="20" y="10.300" width="8" height="7.500" rx="1" fill="#eebb3b"/><rect x="30" y="10.300" width="8" height="7.500" rx="1" fill="#e88d33"/><rect x="10" y="20.500" width="8" height="7.500" rx="1" fill="#d33a2c"/><rect x="20" y="20.500" width="8" height="7.500" rx="1" fill="#a9aeb2"/><rect x="30" y="20.500" width="8" height="7.500" rx="1" fill="#ea5470"/><rect x="10" y="30.700" width="8" height="7.500" rx="1" fill="#8e44c9"/><rect x="20" y="30.700" width="8" height="7.500" rx="1" fill="#2f86e8"/><rect x="30" y="30.700" width="8" height="7.500" rx="1" fill="#5cc9a0"/></svg></div>
  </div>
</div>
</div>
<script src="https://cdn.jsdelivr.net/npm/bootstrap@5.3.0/dist/js/bootstrap.bundle.min.js"></script>
</body>
</html>
